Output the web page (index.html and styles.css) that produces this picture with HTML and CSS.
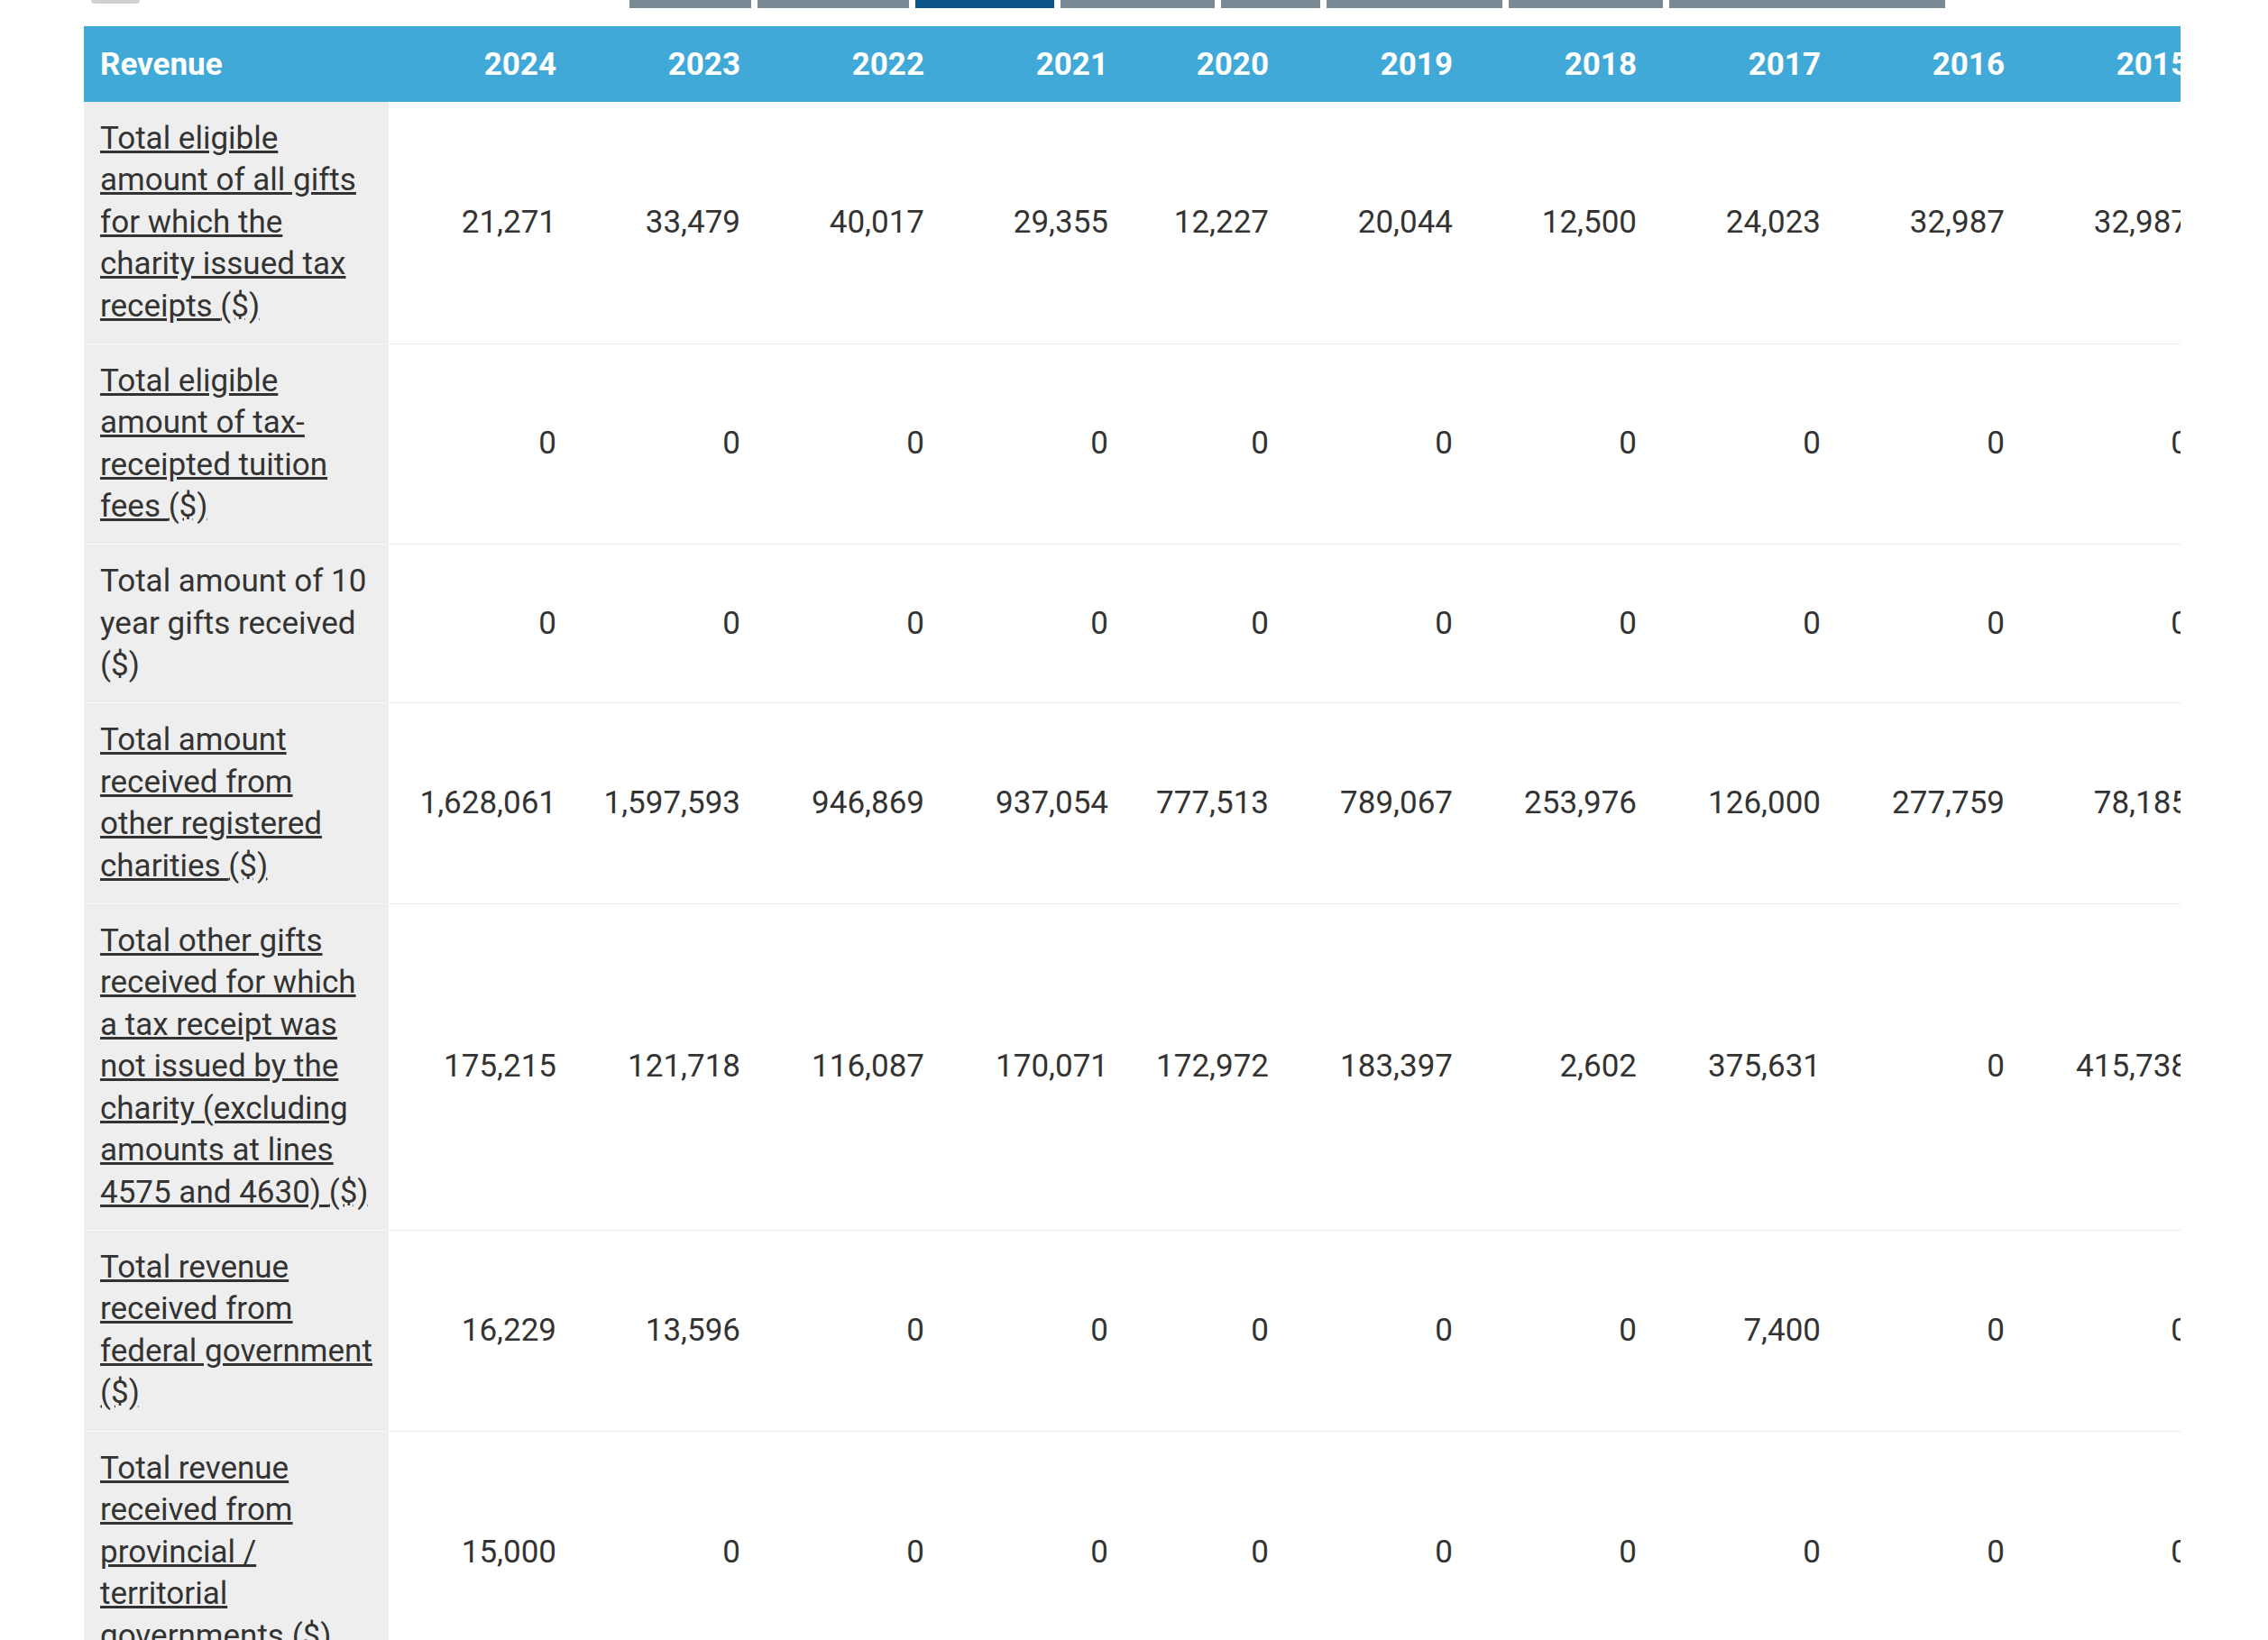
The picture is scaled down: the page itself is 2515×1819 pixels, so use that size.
FILE: index.html
```html
<!DOCTYPE html>
<html lang="en">
<head>
<meta charset="utf-8">
<title>Revenue</title>
<link rel="stylesheet" href="styles.css">
</head>
<body>
<div class="topbar">
  <div class="toggle-end"></div>
  <div class="tabs">
    <span class="tab t1"></span>
    <span class="tab t2"></span>
    <span class="tab t3 active"></span>
    <span class="tab t4"></span>
    <span class="tab t5"></span>
    <span class="tab t6"></span>
    <span class="tab t7"></span>
    <span class="tab t8"></span>
  </div>
</div>

<div class="table-wrap">
  <table class="fin">
    <colgroup>
      <col class="c-label">
      <col class="c-wide"><col class="c-wide"><col class="c-wide"><col class="c-wide">
      <col class="c-narrow">
      <col class="c-wide"><col class="c-wide"><col class="c-wide"><col class="c-wide"><col class="c-wide">
    </colgroup>
    <thead>
      <tr>
        <th class="h-label">Revenue</th>
        <th>2024</th><th>2023</th><th>2022</th><th>2021</th><th>2020</th>
        <th>2019</th><th>2018</th><th>2017</th><th>2016</th><th>2015</th>
      </tr>
    </thead>
    <tbody>
      <tr>
        <th class="label"><a href="#">Total eligible<br>amount of all gifts<br>for which the<br>charity issued tax<br>receipts </a><abbr title="dollars">($)</abbr></th>
        <td>21,271</td><td>33,479</td><td>40,017</td><td>29,355</td><td>12,227</td>
        <td>20,044</td><td>12,500</td><td>24,023</td><td>32,987</td><td>32,987</td>
      </tr>
      <tr>
        <th class="label"><a href="#">Total eligible<br>amount of tax-<br>receipted tuition<br>fees </a><abbr title="dollars">($)</abbr></th>
        <td>0</td><td>0</td><td>0</td><td>0</td><td>0</td>
        <td>0</td><td>0</td><td>0</td><td>0</td><td>0</td>
      </tr>
      <tr>
        <th class="label">Total amount of 10<br>year gifts received<br>($)</th>
        <td>0</td><td>0</td><td>0</td><td>0</td><td>0</td>
        <td>0</td><td>0</td><td>0</td><td>0</td><td>0</td>
      </tr>
      <tr>
        <th class="label"><a href="#">Total amount<br>received from<br>other registered<br>charities </a><abbr title="dollars">($)</abbr></th>
        <td>1,628,061</td><td>1,597,593</td><td>946,869</td><td>937,054</td><td>777,513</td>
        <td>789,067</td><td>253,976</td><td>126,000</td><td>277,759</td><td>78,185</td>
      </tr>
      <tr>
        <th class="label"><a href="#">Total other gifts<br>received for which<br>a tax receipt was<br>not issued by the<br>charity (excluding<br>amounts at lines<br>4575 and 4630) </a><abbr title="dollars">($)</abbr></th>
        <td>175,215</td><td>121,718</td><td>116,087</td><td>170,071</td><td>172,972</td>
        <td>183,397</td><td>2,602</td><td>375,631</td><td>0</td><td>415,738</td>
      </tr>
      <tr>
        <th class="label"><a href="#">Total revenue<br>received from<br>federal government</a><br><abbr title="dollars">($)</abbr></th>
        <td>16,229</td><td>13,596</td><td>0</td><td>0</td><td>0</td>
        <td>0</td><td>0</td><td>7,400</td><td>0</td><td>0</td>
      </tr>
      <tr>
        <th class="label"><a href="#">Total revenue<br>received from<br>provincial /<br>territorial<br>governments </a><abbr title="dollars">($)</abbr></th>
        <td>15,000</td><td>0</td><td>0</td><td>0</td><td>0</td>
        <td>0</td><td>0</td><td>0</td><td>0</td><td>0</td>
      </tr>
    </tbody>
  </table>
</div>
</body>
</html>
```
FILE: styles.css
```css
html, body {
  margin: 0;
  padding: 0;
  background: #ffffff;
}

body {
  font-family: Roboto, "Liberation Sans", Arial, sans-serif;
  font-size: 35px;
  line-height: 46.5px;
  color: #333333;
  overflow: hidden;
}

.topbar {
  display: flex;
  align-items: flex-start;
  height: 9px;
  padding-left: 101px;
}

.toggle-end {
  width: 54px;
  height: 4px;
  background: #cfcfcf;
  border-radius: 0 0 8px 8px;
}

.tabs {
  display: flex;
  gap: 7px;
  margin-left: 543px;
}

.tab {
  display: block;
  height: 9px;
  background: #7a8a95;
}

.tab.active { background: #0b5589; }
.t1 { width: 135px; }
.t2 { width: 168px; }
.t3 { width: 154px; }
.t4 { width: 171px; }
.t5 { width: 110px; }
.t6 { width: 195px; }
.t7 { width: 171px; }
.t8 { width: 306px; }

.table-wrap {
  margin: 20px 0 0 93px;
  width: 2325px;
  overflow: hidden;
}

.fin {
  border-collapse: collapse;
  table-layout: fixed;
  width: 2352px;
}

.c-label { width: 338px; }
.c-wide { width: 204px; }
.c-narrow { width: 178px; }

.fin thead th {
  background: #40a9d8;
  color: #ffffff;
  font-weight: 700;
  text-align: right;
  padding: 19.5px 18px 17.5px;
  white-space: nowrap;
}

.fin thead th.h-label {
  text-align: left;
}

.fin tbody th.label {
  background: #eeeeee;
  font-weight: 400;
  text-align: left;
  vertical-align: middle;
  padding: 18px 18px 17.6px;
  white-space: nowrap;
  border-bottom: 1px solid #fafafa;
}

.fin tbody td {
  text-align: right;
  vertical-align: middle;
  padding: 18px 18px 17.6px;
  white-space: nowrap;
  border-bottom: 1px solid #ebebeb;
}

.fin a {
  color: #333333;
  text-decoration: underline;
}

.fin abbr {
  text-decoration: underline dotted;
  cursor: help;
}
```
